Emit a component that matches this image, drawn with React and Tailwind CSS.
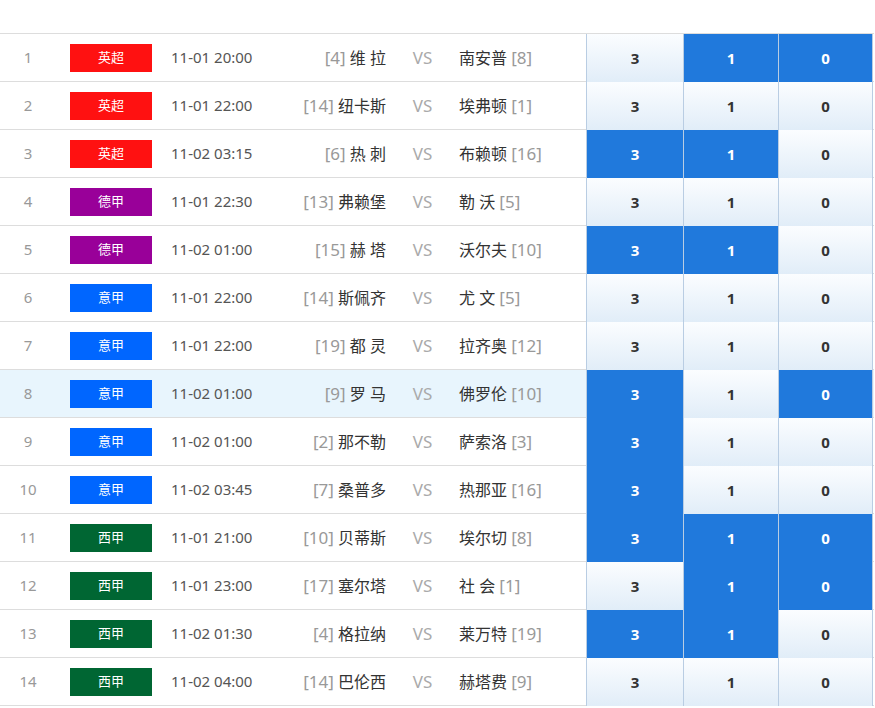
import React from "react";

const LEAGUES = {
  英超: "bg-[#ff1111]",
  德甲: "bg-[#990099]",
  意甲: "bg-[#0066ff]",
  西甲: "bg-[#006633]",
};

const rows = [
  { l: "英超", t: "11-01 20:00", hr: "4", h: "维 拉", a: "南安普", ar: "8", hi: [0, 1, 1] },
  { l: "英超", t: "11-01 22:00", hr: "14", h: "纽卡斯", a: "埃弗顿", ar: "1", hi: [0, 0, 0] },
  { l: "英超", t: "11-02 03:15", hr: "6", h: "热 刺", a: "布赖顿", ar: "16", hi: [1, 1, 0] },
  { l: "德甲", t: "11-01 22:30", hr: "13", h: "弗赖堡", a: "勒 沃", ar: "5", hi: [0, 0, 0] },
  { l: "德甲", t: "11-02 01:00", hr: "15", h: "赫 塔", a: "沃尔夫", ar: "10", hi: [1, 1, 0] },
  { l: "意甲", t: "11-01 22:00", hr: "14", h: "斯佩齐", a: "尤 文", ar: "5", hi: [0, 0, 0] },
  { l: "意甲", t: "11-01 22:00", hr: "19", h: "都 灵", a: "拉齐奥", ar: "12", hi: [0, 0, 0] },
  { l: "意甲", t: "11-02 01:00", hr: "9", h: "罗 马", a: "佛罗伦", ar: "10", hi: [1, 0, 1], hover: true },
  { l: "意甲", t: "11-02 01:00", hr: "2", h: "那不勒", a: "萨索洛", ar: "3", hi: [1, 0, 0] },
  { l: "意甲", t: "11-02 03:45", hr: "7", h: "桑普多", a: "热那亚", ar: "16", hi: [1, 0, 0] },
  { l: "西甲", t: "11-01 21:00", hr: "10", h: "贝蒂斯", a: "埃尔切", ar: "8", hi: [1, 1, 1] },
  { l: "西甲", t: "11-01 23:00", hr: "17", h: "塞尔塔", a: "社 会", ar: "1", hi: [0, 1, 1] },
  { l: "西甲", t: "11-02 01:30", hr: "4", h: "格拉纳", a: "莱万特", ar: "19", hi: [1, 1, 0] },
  { l: "西甲", t: "11-02 04:00", hr: "14", h: "巴伦西", a: "赫塔费", ar: "9", hi: [0, 0, 0] },
];

const vals = ["3", "1", "0"];
const widths = ["w-[97px]", "w-[95px]", "w-[95px]"];

export default function App() {
  return (
    <div
      className="w-[875px] h-[708px] bg-white overflow-hidden"
      style={{ fontFamily: '"Noto Sans", "Noto Sans CJK SC", sans-serif' }}
    >
      <div className="h-[33px]" />
      <div className="w-[874px] border-t border-[#dddddd]">
        {rows.map((r, i) => (
          <div
            key={i}
            className={`flex h-[48px] border-b border-[#dddddd] ${r.hover ? "bg-[#e8f5fd]" : "bg-white"}`}
          >
            <div className="w-[56px] flex items-center justify-center text-[15px] text-[#999999]">
              {i + 1}
            </div>
            <div className="w-[115px] flex items-center pl-[14px]">
              <div
                className={`w-[82px] h-[28px] flex items-center justify-center text-[13px] text-white ${LEAGUES[r.l]}`}
              >
                {r.l}
              </div>
            </div>
            <div className="w-[100px] flex items-center text-[15px] text-[#555555]">{r.t}</div>
            <div className="w-[115px] flex items-center justify-end text-[16px] text-[#333333] whitespace-pre">
              <span className="text-[#999999] text-[17px]">[{r.hr}]</span>
              <span> {r.h}</span>
            </div>
            <div className="w-[73px] flex items-center justify-center text-[17px] text-[#aaaaaa]">VS</div>
            <div className="w-[127px] flex items-center text-[16px] text-[#333333] whitespace-pre">
              <span>{r.a} </span>
              <span className="text-[#999999] text-[17px]">[{r.ar}]</span>
            </div>
            <div className="flex">
              {vals.map((v, j) => (
                <div
                  key={j}
                  className={`${widths[j]} h-[48px] border-l border-[#b9cde3] flex items-center justify-center text-[15px] font-bold ${
                    r.hi[j]
                      ? "bg-[#2079dc] text-white"
                      : "bg-gradient-to-b from-[#fbfdff] to-[#e1edf8] text-[#333333]"
                  } ${j === 2 ? "border-r" : ""}`}
                >
                  {v}
                </div>
              ))}
            </div>
          </div>
        ))}
      </div>
    </div>
  );
}
